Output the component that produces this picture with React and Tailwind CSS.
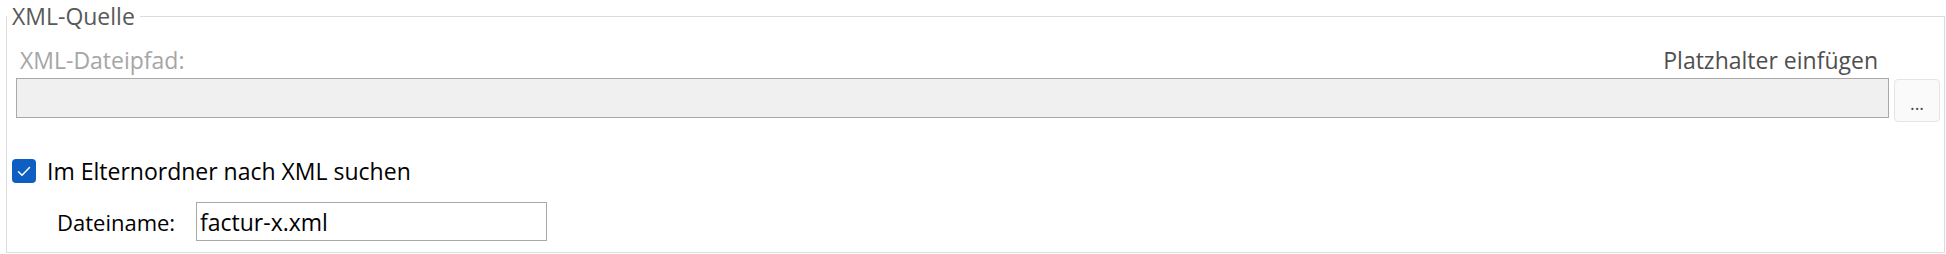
export default function App() {
    return (
        <div className="w-[1946px] h-[254px] bg-white overflow-hidden" style={{ fontFamily: '"Open Sans", "Noto Sans", sans-serif' }}>
            <fieldset className="ml-[6px] mr-[1px] h-[253px] border border-[#dcdcdc] px-0 pb-[10px]">
                <legend className="ml-[0px] px-[5px] text-[23px] leading-[32px] text-[#595959]">XML-Quelle</legend>

                <div className="flex items-start gap-[5px] pl-[9px] pr-[4px] mt-[11px]">
                    <div className="flex-1 flex flex-col">
                        <div className="flex justify-between pl-[4px] pr-[11px] text-[23px] leading-[35px]">
                            <span className="text-[#a6a6a6]">XML-Dateipfad:</span>
                            <span className="text-[#4f4f4f]">Platzhalter einfügen</span>
                        </div>
                        <div className="h-[40px] border border-[#a9a9a9] bg-[#f0f0f0]"></div>
                    </div>
                    <button className="mt-[36px] w-[46px] h-[43px] rounded-[4px] border border-[#e5e5e5] bg-[#fafafa] text-[18px] leading-none text-[#3c4a5c] flex items-center justify-center pt-[4px]">
                        ...
                    </button>
                </div>

                <label className="flex items-center gap-[11px] pl-[5px] mt-[33px]">
                    <span className="w-[24px] h-[24px] rounded-[4px] bg-[#0f5fc2] flex items-center justify-center">
                        <svg width="14" height="11" viewBox="0 0 14 11" fill="none">
                            <path d="M1.5 5.8 L5 9.2 L12.5 1.5" stroke="white" strokeWidth="1.5" strokeLinecap="round" strokeLinejoin="round" />
                        </svg>
                    </span>
                    <span className="text-[23px] leading-[32px] text-black">Im Elternordner nach XML suchen</span>
                </label>

                <div className="flex items-center pl-[50px] mt-[15px]">
                    <span className="w-[139px] text-[22px] leading-[32px] text-black">Dateiname:</span>
                    <input
                        className="w-[351px] h-[39px] border border-[#a9a9a9] bg-white px-[3px] text-[23px] text-black outline-none"
                        style={{ fontFamily: '"Open Sans", "Noto Sans", sans-serif' }}
                        defaultValue="factur-x.xml"
                    />
                </div>
            </fieldset>
        </div>
    );
}
